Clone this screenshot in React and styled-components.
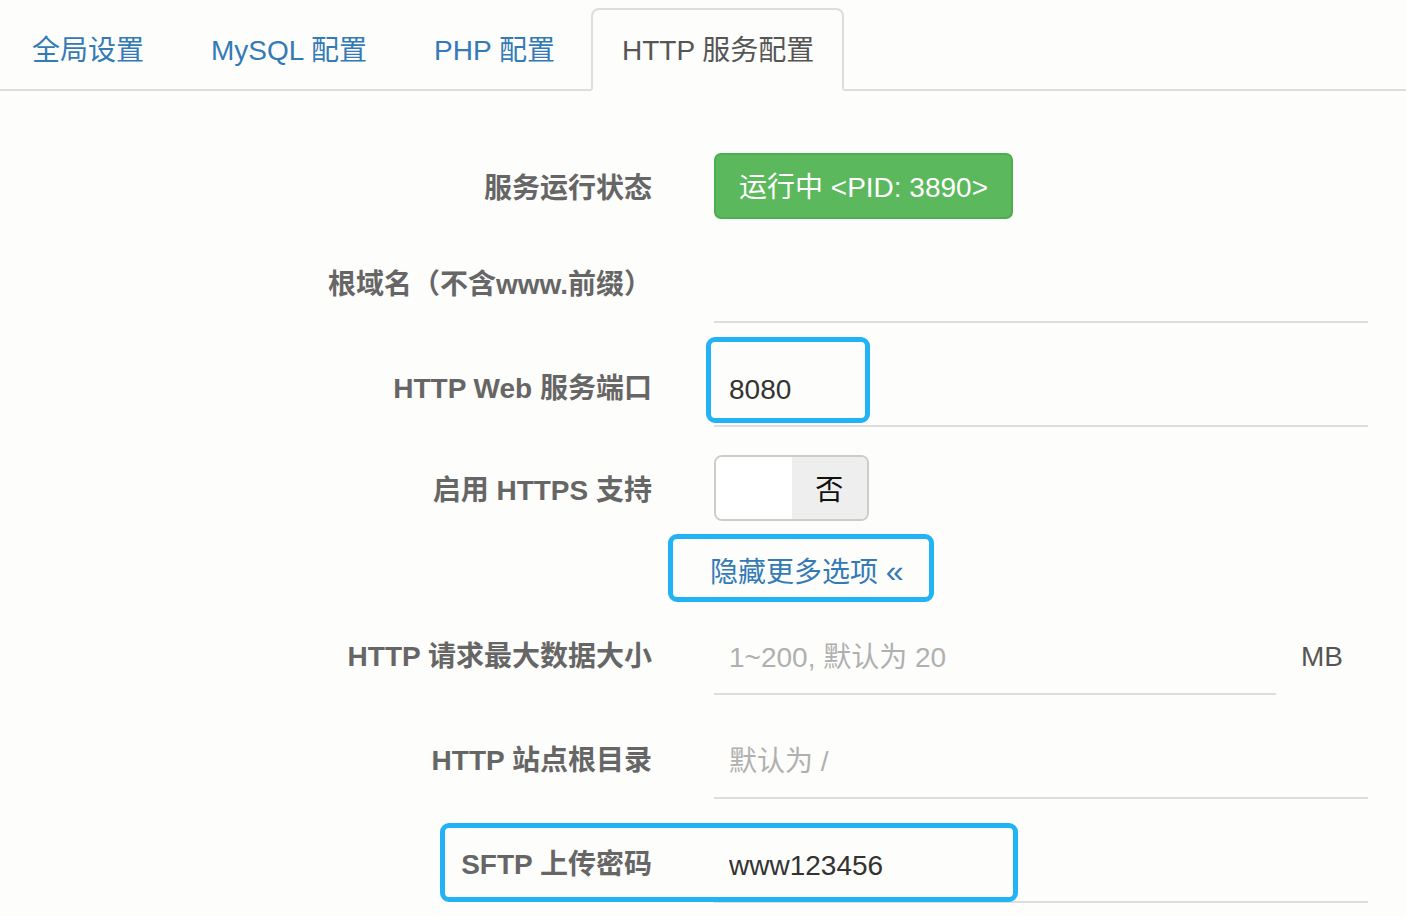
import React from 'react'
import styled, { createGlobalStyle } from 'styled-components'

const GlobalStyle = createGlobalStyle`
  html, body {
    margin: 0;
    padding: 0;
    background: #fdfdfb;
  }
  body {
    font-family: 'Liberation Sans', Arial, 'Noto Sans CJK SC', sans-serif;
    font-size: 28px;
    color: #333;
  }
  * {
    box-sizing: border-box;
  }
`

// Tabs
const TabBar = styled.ul`
  display: flex;
  margin: 0;
  padding: 8px 0 0 1px;
  list-style: none;
  border-bottom: 2px solid #ddd;
`

const Tab = styled.li`
  height: 83px;
  margin: 0 6px -2px 0;
  padding: 0 28px 4px 29px;
  display: flex;
  align-items: center;
  font-size: 28px;
  color: ${(p) => (p.$active ? '#555' : '#337ab7')};
  background: ${(p) => (p.$active ? '#fdfdfb' : 'transparent')};
  border: 2px solid ${(p) => (p.$active ? '#ddd' : 'transparent')};
  border-bottom-color: ${(p) => (p.$active ? '#fdfdfb' : 'transparent')};
  border-radius: 8px 8px 0 0;
  cursor: pointer;
`

// Form
const Form = styled.form`
  display: flex;
  flex-direction: column;
  gap: 28px;
  padding-top: 62px;
  width: 1368px;
`

const Row = styled.div`
  position: relative;
  display: grid;
  grid-template-columns: 652px 1fr;
  column-gap: 62px;
  align-items: center;
  min-height: ${(p) => p.$h || 76}px;
`

const Label = styled.label`
  text-align: right;
  font-weight: bold;
  color: #666;
  white-space: nowrap;
  padding-bottom: ${(p) => (p.$field ? 7 : 0)}px;
`

const StatusButton = styled.button`
  justify-self: start;
  height: 66px;
  padding: 0 23px 3px;
  font: inherit;
  font-size: 28px;
  color: #fff;
  background: #5cb85c;
  border: 2px solid #4cae4c;
  border-radius: 7px;
`

const Field = styled.div`
  display: flex;
  align-items: center;
`

const Input = styled.input`
  flex: 1;
  min-width: 0;
  height: 76px;
  padding: 3px 15px 0;
  font: inherit;
  font-size: 28px;
  color: #333;
  background: transparent;
  border: none;
  border-bottom: 2px solid #ddd;
  outline: none;
  &::placeholder {
    color: #b0b0b0;
  }
`

const Addon = styled.span`
  width: 92px;
  text-align: center;
  color: #555;
`

const Toggle = styled.div`
  justify-self: start;
  display: flex;
  width: 155px;
  height: 66px;
  border: 2px solid #ccc;
  border-radius: 8px;
  overflow: hidden;
`

const ToggleHalf = styled.span`
  flex: 1;
  display: flex;
  align-items: center;
  justify-content: center;
  background: ${(p) => (p.$on ? '#eee' : '#fff')};
  color: #111;
`

const MoreLink = styled.a`
  justify-self: start;
  margin-left: -4px;
  color: #337ab7;
  text-decoration: none;
  cursor: pointer;
`

const Chevrons = styled.span`
  font-size: 32px;
  line-height: 1;
`

// Callout frame drawn over a row
const Callout = styled.span`
  position: absolute;
  left: ${(p) => p.$x}px;
  top: ${(p) => p.$y}px;
  width: ${(p) => p.$w}px;
  height: ${(p) => p.$h}px;
  border: 5px solid #22b3f4;
  border-radius: 9px;
  pointer-events: none;
`

const tabs = ['全局设置', 'MySQL 配置', 'PHP 配置', 'HTTP 服务配置']

const App = () => {
  return (
    <>
      <GlobalStyle />
      <TabBar>
        {tabs.map((t, i) => (
          <Tab key={t} $active={i === 3}>
            {t}
          </Tab>
        ))}
      </TabBar>
      <Form onSubmit={(e) => e.preventDefault()}>
        <Row $h={66}>
          <Label>服务运行状态</Label>
          <StatusButton type='button'>运行中 &lt;PID: 3890&gt;</StatusButton>
        </Row>
        <Row>
          <Label $field>根域名（不含www.前缀）</Label>
          <Field>
            <Input />
          </Field>
        </Row>
        <Row>
          <Label $field>HTTP Web 服务端口</Label>
          <Field>
            <Input defaultValue='8080' />
          </Field>
          <Callout $x={706} $y={-14} $w={164} $h={86} />
        </Row>
        <Row $h={66}>
          <Label>启用 HTTPS 支持</Label>
          <Toggle>
            <ToggleHalf />
            <ToggleHalf $on>否</ToggleHalf>
          </Toggle>
        </Row>
        <Row $h={42}>
          <span />
          <MoreLink>
            隐藏更多选项 <Chevrons>«</Chevrons>
          </MoreLink>
          <Callout $x={668} $y={-15} $w={266} $h={68} />
        </Row>
        <Row>
          <Label $field>HTTP 请求最大数据大小</Label>
          <Field>
            <Input placeholder='1~200, 默认为 20' />
            <Addon>MB</Addon>
          </Field>
        </Row>
        <Row>
          <Label $field>HTTP 站点根目录</Label>
          <Field>
            <Input placeholder='默认为 /' />
          </Field>
        </Row>
        <Row>
          <Label $field>SFTP 上传密码</Label>
          <Field>
            <Input defaultValue='www123456' />
          </Field>
          <Callout $x={440} $y={-4} $w={578} $h={79} />
        </Row>
      </Form>
    </>
  )
}

export default App
